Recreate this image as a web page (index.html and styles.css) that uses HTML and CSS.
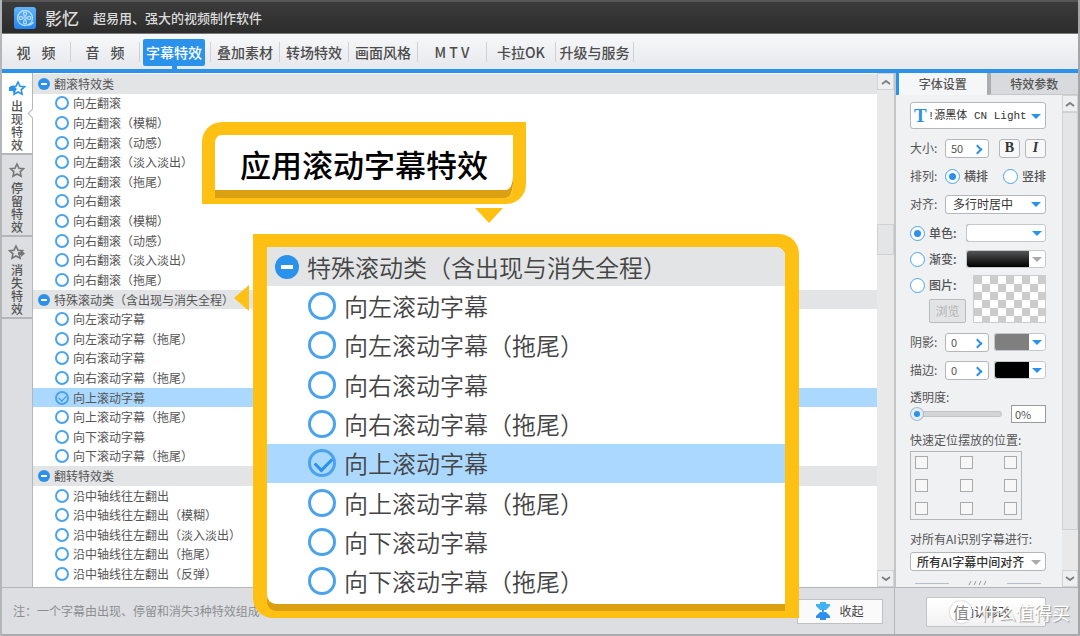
FILE: index.html
```html
<!DOCTYPE html>
<html lang="zh-CN">
<head>
  <meta charset="UTF-8" />
  <meta name="viewport" content="width=device-width, initial-scale=1.0"/>
  <title>影忆</title>
  <link rel="stylesheet" href="styles.css">
</head>
<body>
  <header class="topbar">
    <svg class="logo" viewBox="0 0 22 22">
      <defs>
        <linearGradient id="logoBg" x1="0" y1="0" x2="0" y2="1">
          <stop offset="0" stop-color="#62b4f7"/>
          <stop offset="1" stop-color="#2484f0"/>
        </linearGradient>
      </defs>
      <rect width="22" height="22" rx="3" fill="url(#logoBg)"/>
      <g fill="none" stroke="#b4dcff" stroke-width="1.3">
        <circle cx="11" cy="11" r="7.5"/>
        <circle cx="11" cy="11" r="1.3"/>
        <circle cx="11" cy="6.8" r="1.6"/>
        <circle cx="11" cy="15.2" r="1.6"/>
        <circle cx="6.8" cy="11" r="1.6"/>
        <circle cx="15.2" cy="11" r="1.6"/>
        <path d="M14 18c2 0 4-1 5.500-3"/>
      </g>
    </svg>
    <h1>影忆</h1>
    <p>超易用、强大的视频制作软件</p>
  </header>

  <nav class="main-nav">
    <a href="#" class="spaced">视 频</a>
    <a href="#" class="spaced">音 频</a>
    <a href="#" class="active"><span>字幕特效</span></a>
    <a href="#">叠加素材</a>
    <a href="#">转场特效</a>
    <a href="#">画面风格</a>
    <a href="#">M T V</a>
    <a href="#">卡拉OK</a>
    <a href="#" class="wide">升级与服务</a>
  </nav>

  <main>
    <aside class="side-tabs">
      <button class="side-tab active">
        <svg viewBox="0 0 18 16"><path d="M10 2l2 4.200 4.500.5-3.300 3.100.9 4.500L10 12l-4 2.300.9-4.500L3.600 6.700 8 6.200z"/><path class="fill" d="M1 7h4v-2l4 4-4 4v-2H1z"/></svg>
        <span>出现特效</span>
      </button>
      <button class="side-tab">
        <svg viewBox="0 0 18 16"><path d="M9 2l2 4.200 4.500.5-3.300 3.100.9 4.500L9 12l-4 2.300.9-4.500L2.600 6.700 7 6.200z"/></svg>
        <span>停留特效</span>
      </button>
      <button class="side-tab">
        <svg viewBox="0 0 18 16"><path d="M8 2l2 4.200 4.500.5-3.300 3.100.9 4.500L8 12l-4 2.300.9-4.500L1.600 6.700 6 6.200z"/><path class="fill" d="M10 8h3v-2l4 3.500-4 3.500v-2h-3z"/></svg>
        <span>消失特效</span>
      </button>
    </aside>

    <section class="effects">
      <div class="effect-list">
        <h2>翻滚特效类</h2>
        <label><input type="radio" name="effect">向左翻滚</label>
        <label><input type="radio" name="effect">向左翻滚（模糊）</label>
        <label><input type="radio" name="effect">向左翻滚（动感）</label>
        <label><input type="radio" name="effect">向左翻滚（淡入淡出）</label>
        <label><input type="radio" name="effect">向左翻滚（拖尾）</label>
        <label><input type="radio" name="effect">向右翻滚</label>
        <label><input type="radio" name="effect">向右翻滚（模糊）</label>
        <label><input type="radio" name="effect">向右翻滚（动感）</label>
        <label><input type="radio" name="effect">向右翻滚（淡入淡出）</label>
        <label><input type="radio" name="effect">向右翻滚（拖尾）</label>
        <h2>特殊滚动类（含出现与消失全程）</h2>
        <label><input type="radio" name="effect">向左滚动字幕</label>
        <label><input type="radio" name="effect">向左滚动字幕（拖尾）</label>
        <label><input type="radio" name="effect">向右滚动字幕</label>
        <label><input type="radio" name="effect">向右滚动字幕（拖尾）</label>
        <label class="selected"><input type="radio" name="effect" checked>向上滚动字幕</label>
        <label><input type="radio" name="effect">向上滚动字幕（拖尾）</label>
        <label><input type="radio" name="effect">向下滚动字幕</label>
        <label><input type="radio" name="effect">向下滚动字幕（拖尾）</label>
        <h2>翻转特效类</h2>
        <label><input type="radio" name="effect">沿中轴线往左翻出</label>
        <label><input type="radio" name="effect">沿中轴线往左翻出（模糊）</label>
        <label><input type="radio" name="effect">沿中轴线往左翻出（淡入淡出）</label>
        <label><input type="radio" name="effect">沿中轴线往左翻出（拖尾）</label>
        <label><input type="radio" name="effect">沿中轴线往左翻出（反弹）</label>
      </div>
      <div class="scrollbar list-scroll">
        <button class="scroll-btn" aria-label="向上"><svg viewBox="0 0 10 6"><path d="M1 5l4-3 4 3"/></svg></button>
        <div class="thumb"></div>
        <button class="scroll-btn" aria-label="向下"><svg viewBox="0 0 10 6"><path d="M1 1l4 3 4-3"/></svg></button>
      </div>
    </section>

    <section class="settings">
      <div class="setting-tabs">
        <button class="active">字体设置</button>
        <button>特效参数</button>
      </div>
      <div class="setting-wrap">
        <form class="setting-body">
          <div class="select font-select">
            <b>T</b>
            <select aria-label="字体"><option>!源黑体 CN Light</option></select>
          </div>
          <div class="group">
            <div class="row">
              <label for="size">大小:</label>
              <div class="spin"><input type="text" id="size" value="50"></div>
              <button type="button" class="style-btn first">B</button>
              <button type="button" class="style-btn italic">I</button>
            </div>
            <div class="row">
              <span class="caption">排列:</span>
              <label class="option"><input type="radio" name="dir" checked>横排</label>
              <label class="option last"><input type="radio" name="dir">竖排</label>
            </div>
            <div class="row">
              <label for="align">对齐:</label>
              <div class="select grow"><select id="align"><option>多行时居中</option></select></div>
            </div>
          </div>

          <div class="group tight">
            <div class="row">
              <label class="option"><input type="radio" name="fill" checked>单色:</label>
              <button type="button" class="swatch long white" aria-label="单色"></button>
            </div>
            <div class="row">
              <label class="option"><input type="radio" name="fill">渐变:</label>
              <button type="button" class="swatch long gradient" aria-label="渐变"></button>
            </div>
            <div class="row picture">
              <div class="picture-left">
                <label class="option"><input type="radio" name="fill">图片:</label>
                <button type="button" class="browse" disabled>浏览</button>
              </div>
              <div class="checker"></div>
            </div>
          </div>

          <div class="group">
            <div class="row">
              <label for="shadow">阴影:</label>
              <div class="spin"><input type="text" id="shadow" value="0"></div>
              <button type="button" class="swatch gray" aria-label="阴影颜色"></button>
            </div>
            <div class="row">
              <label for="stroke">描边:</label>
              <div class="spin"><input type="text" id="stroke" value="0"></div>
              <button type="button" class="swatch black" aria-label="描边颜色"></button>
            </div>
          </div>

          <div class="block">
            <label for="opacity">透明度:</label>
            <div class="slider-row">
              <input type="range" id="opacity" min="0" max="100" value="0">
              <input type="text" class="percent" value="0%" aria-label="透明度数值">
            </div>
          </div>

          <div class="block">
            <span>快速定位摆放的位置:</span>
            <div class="anchor-grid">
              <button type="button" aria-label="左上"></button><button type="button" aria-label="上"></button><button type="button" aria-label="右上"></button>
              <button type="button" aria-label="左"></button><button type="button" aria-label="中"></button><button type="button" aria-label="右"></button>
              <button type="button" aria-label="左下"></button><button type="button" aria-label="下"></button><button type="button" aria-label="右下"></button>
            </div>
          </div>

          <div class="block ai">
            <label for="ai">对所有AI识别字幕进行:</label>
            <div class="select muted"><select id="ai"><option>所有AI字幕中间对齐</option></select></div>
          </div>

          <div class="divider"><i></i><svg viewBox="0 0 20 6"><path d="M3 1L1 5M8 1L6 5M13 1l-2 4M18 1l-2 4"/></svg><i></i></div>
        </form>
        <div class="scrollbar">
          <button class="scroll-btn" aria-label="向上"><svg viewBox="0 0 10 6"><path d="M1 5l4-3 4 3"/></svg></button>
          <div class="thumb big"></div>
          <button class="scroll-btn" aria-label="向下"><svg viewBox="0 0 10 6"><path d="M1 1l4 3 4-3"/></svg></button>
        </div>
      </div>
    </section>
  </main>

  <footer>
    <div class="foot-left">
      <p>注：一个字幕由出现、停留和消失3种特效组成</p>
      <button class="collapse-btn">
        <svg viewBox="0 0 14 18"><path fill="#43b2f2" d="M4 0h6v2h4v2l-4 4H4L0 4V2h4z"/><path fill="#2f8fee" d="M4 10h6l4 4v2h-4v2H4v-2H0v-2z"/><path fill="#3aa0f0" d="M6 7h2v4H6z"/></svg>
        收起
      </button>
    </div>
    <div class="foot-right">
      <button class="apply-btn">确认修改</button>
    </div>
  </footer>

  <div class="callout">应用滚动字幕特效</div>
  <div class="arrow-down"></div>
  <div class="arrow-left"></div>

  <div class="popup">
    <div class="effect-list large">
      <h2>特殊滚动类（含出现与消失全程）</h2>
      <label><input type="radio" name="zoomed">向左滚动字幕</label>
      <label><input type="radio" name="zoomed">向左滚动字幕（拖尾）</label>
      <label><input type="radio" name="zoomed">向右滚动字幕</label>
      <label><input type="radio" name="zoomed">向右滚动字幕（拖尾）</label>
      <label class="selected"><input type="radio" name="zoomed" checked>向上滚动字幕</label>
      <label><input type="radio" name="zoomed">向上滚动字幕（拖尾）</label>
      <label><input type="radio" name="zoomed">向下滚动字幕</label>
      <label><input type="radio" name="zoomed">向下滚动字幕（拖尾）</label>
    </div>
  </div>

  <div class="watermark"><span>值</span>什么值得买</div>
</body>
</html>
```

FILE: styles.css
```css
:root {
  --blue: #2a92ea;
  --yellow: #ffc014;
  --yellow-dark: #dba012;
  --line: #b4b6b9;
  --head: #e3e4e6;
  --select: #abd8ff;
  --text: #555;
}
* {
  margin: 0;
  padding: 0;
  box-sizing: border-box;
}
body {
  position: relative;
  display: flex;
  flex-direction: column;
  min-height: 100vh;
  font-family: 'Noto Sans CJK SC', sans-serif;
  font-size: 12px;
  line-height: 16px;
  color: var(--text);
  background: #dcdee1;
  border-left: 2px solid #b5b6b8;
  border-right: 2px solid #a5a6a8;
  border-bottom: 2px solid #a9abae;
}
button, input, select {
  font: inherit;
  color: inherit;
}

/* top */
.topbar {
  display: flex;
  align-items: center;
  height: 34px;
  margin: 0 -2px;
  padding-left: 14px;
  color: #dcdcdc;
  background: linear-gradient(#3c3c3c, #2c2c2c);
  border-top: 2px solid #565656;
  border-bottom: 1px solid #777;
}
.logo {
  width: 22px;
  height: 22px;
}
.topbar h1 {
  margin: 0 14px 0 9px;
  font-size: 17px;
  font-weight: 500;
}
.topbar p {
  font-size: 13px;
  font-weight: 500;
}
.main-nav {
  display: flex;
  align-items: center;
  height: 39px;
  background: linear-gradient(#f7f8fa, #e6e8ec);
  border-bottom: 4px solid var(--blue);
}
.main-nav a {
  position: relative;
  width: 69px;
  height: 20px;
  line-height: 20px;
  font-size: 14px;
  font-weight: 500;
  text-align: center;
  white-space: nowrap;
  color: #4c4c4c;
  text-decoration: none;
  border-right: 1px solid #cfd1d5;
}
.main-nav .spaced {
  word-spacing: 8px;
}
.main-nav .active {
  width: 71px;
  color: #fff;
}
.main-nav .active span {
  display: block;
  height: 27px;
  margin: -3px 5px -4px 3px;
  line-height: 27px;
  border-radius: 2px;
  background: var(--blue);
}
.main-nav .active::after {
  content: '';
  position: absolute;
  left: 32px;
  top: 23px;
  width: 5px;
  height: 6px;
  background: var(--blue);
}
.main-nav .wide {
  width: 78px;
}

main {
  flex: 1;
  display: grid;
  grid-template-columns: 31px 1fr 184px;
  border-bottom: 1px solid var(--line);
}

/* left tabs */
.side-tabs {
  border-right: 1px solid var(--line);
}
.side-tab {
  position: relative;
  display: flex;
  flex-direction: column;
  align-items: center;
  gap: 3px;
  width: 100%;
  height: 82px;
  padding-top: 7px;
  border: none;
  border-bottom: 2px solid var(--line);
  background: #dcdee1;
  font-weight: 500;
}
.side-tab svg {
  width: 18px;
  height: 16px;
  flex: none;
  fill: none;
  stroke: #777;
  stroke-width: 1.6;
}
.side-tab .fill {
  fill: #777;
  stroke: none;
}
.side-tab span {
  width: 12px;
  line-height: 13px;
  word-break: break-all;
}
.side-tab.active {
  background: #fff;
}
.side-tab.active::after {
  content: '';
  position: absolute;
  right: -4px;
  top: 37px;
  width: 6px;
  height: 6px;
  background: #fff;
  border-left: 1px solid var(--line);
  border-bottom: 1px solid var(--line);
  transform: rotate(45deg);
}
.side-tab.active svg {
  stroke: var(--blue);
}
.side-tab.active .fill {
  fill: var(--blue);
}

/* effect list */
.effects {
  display: flex;
}
.effect-list {
  flex: 1;
  display: flex;
  flex-direction: column;
  padding: 1px 0 3px;
  background: #fff;
}
.effect-list h2,
.effect-list label {
  flex: 1 0 18px;
  display: flex;
  align-items: center;
  font-size: 12px;
  font-weight: 400;
}
.effect-list h2 {
  gap: 4px;
  padding-left: 5px;
  background: var(--head);
}
.effect-list h2::before {
  content: '';
  width: 12px;
  height: 12px;
  border-radius: 50%;
  background: linear-gradient(#fff, #fff) center / 6px 2px no-repeat var(--blue);
}
.effect-list label {
  gap: 4px;
  padding-left: 22px;
}
.effect-list .selected {
  background: var(--select);
}
input[type="radio"] {
  appearance: none;
  position: relative;
  flex: none;
  width: 14px;
  height: 14px;
  border: 2px solid #4ba3ee;
  border-radius: 50%;
  background: #fff;
}
.effect-list input:checked {
  background: transparent;
}
.effect-list input:checked::after {
  content: '';
  position: absolute;
  left: 2px;
  top: 2px;
  width: 6px;
  height: 4px;
  border-left: 1px solid var(--blue);
  border-bottom: 1px solid var(--blue);
  transform: rotate(-45deg);
}

.scrollbar {
  display: flex;
  flex-direction: column;
  width: 17px;
  background: #e9e9ea;
}
.scroll-btn {
  height: 17px;
  border: 1px solid #d2d3d5;
  background: #eeeff0;
}
.scroll-btn svg {
  display: block;
  width: 10px;
  height: 6px;
  margin: 0 auto;
  fill: none;
  stroke: #808080;
  stroke-width: 2;
}
.thumb {
  height: 31px;
  margin: 134px 0 auto;
  border: 1px solid #d0d1d3;
  background: #e4e5e7;
}
.thumb.big {
  flex: 1;
  margin: 0 0 40px;
}

/* right panel */
.settings {
  display: flex;
  flex-direction: column;
  background: #f0f1f3;
  border-left: 2px solid #c3c5c8;
}
.setting-tabs {
  display: flex;
  height: 22px;
}
.setting-tabs button {
  flex: 1;
  border: none;
  border-left: 4px solid #aaacb0;
  border-bottom: 1px solid #c6c8cb;
  background: #d8dadd;
  font-weight: 500;
}
.setting-tabs .active {
  border-left: 3px solid var(--blue);
  border-bottom: none;
  background: #f5f6f8;
}
.setting-wrap {
  flex: 1;
  display: flex;
}
.setting-body {
  flex: 1;
  padding: 7px 16px 0 14px;
}
.setting-wrap .scrollbar {
  width: 16px;
}
.group {
  display: flex;
  flex-direction: column;
  gap: 8px;
  margin-top: 9px;
}
.group.tight {
  gap: 6px;
}
.row {
  display: flex;
  align-items: center;
  height: 20px;
}
.row > label:not(.option),
.caption {
  width: 35px;
}
.option {
  display: flex;
  align-items: center;
  gap: 4px;
  font-weight: 500;
}
.option.last {
  margin-left: auto;
}
.option input {
  width: 15px;
  height: 15px;
  border-width: 1px;
}
.option input:checked::after {
  content: '';
  position: absolute;
  left: 3px;
  top: 3px;
  width: 7px;
  height: 7px;
  border-radius: 50%;
  background: var(--blue);
}
.select {
  position: relative;
  display: flex;
  align-items: center;
  height: 19px;
  border: 1px solid var(--line);
  border-radius: 3px;
  background: #fff;
  color: #333;
}
.select select {
  appearance: none;
  width: 100%;
  padding-left: 7px;
  border: none;
  background: none;
}
.select::after,
.swatch::after {
  content: '';
  position: absolute;
  right: 4px;
  top: 50%;
  margin-top: -2px;
  border: 5px solid transparent;
  border-top-color: var(--blue);
  border-bottom: none;
}
.select.muted::after,
.swatch.gradient::after {
  border-top-color: #aaa;
}
.font-select {
  height: 27px;
}
.font-select b {
  padding-left: 3px;
  font-family: 'Liberation Serif', serif;
  font-size: 19px;
  color: var(--blue);
}
.font-select select {
  padding-left: 1px;
  font-family: 'Liberation Mono', 'Noto Sans CJK SC', monospace;
  font-size: 11px;
}
.grow {
  flex: 1;
}
.spin {
  position: relative;
  width: 44px;
  height: 19px;
}
.spin input {
  width: 100%;
  height: 100%;
  padding-left: 5px;
  border: 1px solid var(--line);
  border-radius: 3px;
  background: #fff;
  font-size: 11px;
}
.spin::after {
  content: '';
  position: absolute;
  right: 8px;
  top: 7px;
  width: 5px;
  height: 5px;
  border-top: 2px solid var(--blue);
  border-right: 2px solid var(--blue);
  transform: rotate(45deg);
}
.style-btn {
  width: 21px;
  height: 19px;
  margin-left: 5px;
  border: 1px solid var(--line);
  border-radius: 3px;
  background: #f8f8f9;
  color: #333;
  font: bold 14px/16px 'Liberation Serif', serif;
}
.style-btn.first {
  margin-left: auto;
}
.style-btn.italic {
  font-style: italic;
}
.swatch {
  position: relative;
  width: 52px;
  height: 18px;
  margin-left: auto;
  border: 1px solid var(--line);
  border-right: 17px solid #fff;
  border-radius: 3px;
  background: #fff;
  outline: 1px solid #c5c7ca;
  outline-offset: -1px;
}
.swatch::after {
  right: -13px;
}
.swatch.long {
  width: 80px;
}
.swatch.gradient {
  background: linear-gradient(#555, #000);
}
.swatch.gray {
  background: #7f7f7f;
}
.swatch.black {
  background: #000;
}
.row.picture {
  align-items: flex-start;
  justify-content: space-between;
  height: 48px;
}
.picture .option {
  height: 20px;
}
.browse {
  display: block;
  width: 37px;
  height: 24px;
  margin: 4px 0 0 19px;
  border: 1px solid #b9bbbe;
  border-radius: 2px;
  background: #e3e4e6;
  color: #b3b3b3;
}
.checker {
  width: 73px;
  height: 48px;
  border: 1px solid #ccc;
  background: repeating-conic-gradient(#fff 0 25%, #ccc 0 50%) 0 0 / 16px 16px;
}
.block {
  margin-top: 9px;
}
.block > label,
.block > span {
  display: block;
}
.slider-row {
  display: flex;
  align-items: center;
  justify-content: space-between;
  height: 18px;
}
input[type="range"] {
  appearance: none;
  width: 92px;
  height: 6px;
  border: 1px solid #c2c4c6;
  border-radius: 3px;
  background: #d3d5d7;
}
input[type="range"]::-webkit-slider-thumb {
  appearance: none;
  width: 12px;
  height: 12px;
  border: 3px solid #e4eef8;
  border-radius: 50%;
  background: var(--blue);
  box-shadow: 0 0 0 1px #a8bccf;
}
.percent {
  width: 35px;
  height: 18px;
  padding-left: 3px;
  border: 1px solid #999;
  background: #fff;
  font-size: 11px;
}
.anchor-grid {
  display: grid;
  grid-template-columns: repeat(3, 13px);
  justify-content: space-between;
  align-content: space-between;
  width: 112px;
  height: 69px;
  margin-top: 3px;
  padding: 4px;
  border: 1px solid var(--line);
}
.anchor-grid button {
  height: 13px;
  border: 1px solid #aaa;
  background: #f7f7f7;
}
.block.ai {
  margin-top: 11px;
}
.ai .select {
  margin-top: 5px;
}
.ai select {
  padding-left: 6px;
  font-weight: 500;
}
.divider {
  display: flex;
  align-items: center;
  justify-content: space-between;
  padding: 9px 5px 0;
}
.divider i {
  width: 34px;
  height: 1px;
  background: #b5bfc9;
}
.divider svg {
  width: 20px;
  height: 6px;
  stroke: #999;
}

/* bottom */
footer {
  display: flex;
  height: 46px;
}
.foot-left {
  flex: 1;
  display: flex;
  align-items: center;
  justify-content: space-between;
  padding: 0 11px;
  color: #8c8e91;
}
.collapse-btn {
  display: flex;
  align-items: center;
  justify-content: center;
  gap: 9px;
  width: 86px;
  height: 25px;
  border: 1px solid #bfc1c4;
  background: #fafafa;
  color: #444;
}
.collapse-btn svg {
  width: 14px;
  height: 18px;
}
.foot-right {
  width: 184px;
  padding: 9px 31px;
  border-left: 1px solid var(--line);
}
.apply-btn {
  width: 120px;
  height: 30px;
  border: 1px solid #c2c4c7;
  border-radius: 2px;
  background: linear-gradient(#fff, #f2f2f3);
  color: #444;
}

/* overlays */
.callout {
  position: absolute;
  left: 200px;
  top: 122px;
  width: 324px;
  height: 82px;
  border: 13px solid var(--yellow);
  border-bottom-width: 6px;
  border-radius: 20px 0 20px 0;
  background: #fff;
  box-shadow: inset 0 -8px 0 var(--yellow-dark);
  color: #000;
  font-size: 31px;
  font-weight: 500;
  line-height: 58px;
  text-align: center;
}
.arrow-down {
  position: absolute;
  left: 473px;
  top: 208px;
  border: 14px solid transparent;
  border-top: 15px solid var(--yellow);
  border-bottom: none;
}
.arrow-left {
  position: absolute;
  left: 232px;
  top: 285px;
  border: 13px solid transparent;
  border-right: 15px solid var(--yellow);
  border-left: none;
}
.popup {
  position: absolute;
  left: 251px;
  top: 234px;
  width: 546px;
  height: 384px;
  display: flex;
  padding: 13px 14px 14px;
  border-radius: 0 20px 0 20px;
  background: var(--yellow);
}
.large {
  padding: 0 0 3px;
  border-radius: 0 9px 0 9px;
  box-shadow: 0 7px 0 var(--yellow-dark);
  overflow: hidden;
  color: #444;
}
.large h2,
.large label {
  font-size: 24px;
  font-weight: 350;
  line-height: 32px;
}
.large h2 {
  gap: 8px;
  padding-left: 8px;
}
.large h2::before {
  width: 24px;
  height: 24px;
  background-size: 12px 4px;
}
.large label {
  gap: 8px;
  padding-left: 41px;
}
.large input[type="radio"] {
  width: 28px;
  height: 28px;
  border-width: 3px;
}
.large input:checked::after {
  left: 4px;
  top: 5px;
  width: 14px;
  height: 8px;
  border-width: 3px;
}
.watermark {
  position: absolute;
  right: 8px;
  bottom: 10px;
  display: flex;
  align-items: center;
  gap: 8px;
  color: #fff;
  font-size: 18px;
  line-height: 24px;
  text-shadow: 1px 1px 1px #999;
}
.watermark span {
  width: 22px;
  height: 22px;
  line-height: 22px;
  border-radius: 50%;
  background: #fff;
  box-shadow: 0 0 2px #aaa;
  color: #888;
  font-size: 16px;
  text-align: center;
  text-shadow: none;
}
```
